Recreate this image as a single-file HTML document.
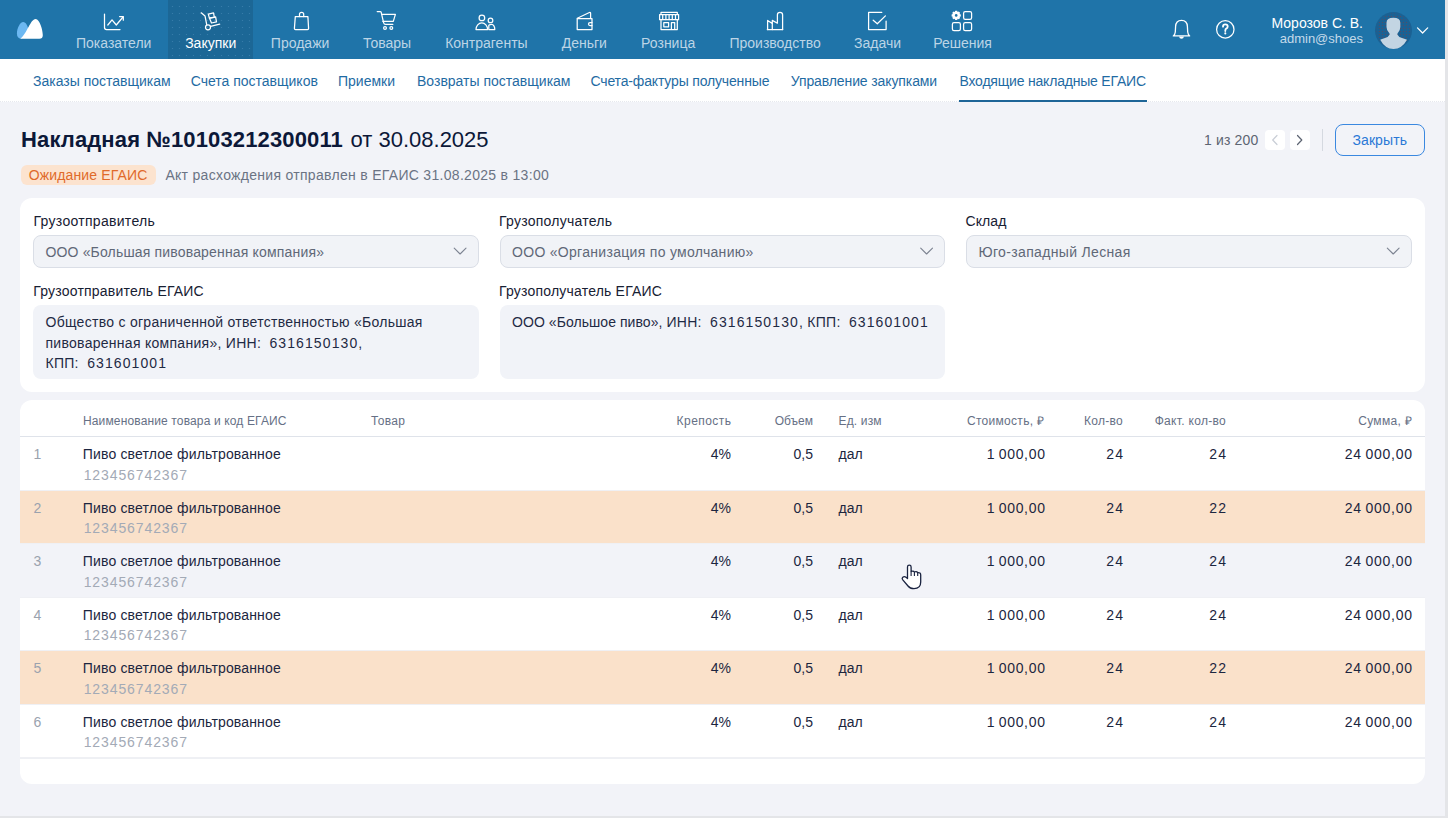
<!DOCTYPE html>
<html><head><meta charset="utf-8">
<style>
*{box-sizing:border-box;margin:0;padding:0}
html,body{width:1448px;height:818px;overflow:hidden}
body{position:relative;background:#f2f3f8;font-family:"Liberation Sans",sans-serif;color:#1c2640}
.a{position:absolute;white-space:nowrap}
#nav{position:absolute;left:0;top:0;width:1445px;height:59px;background:#1f74a9}
#active{position:absolute;left:168px;top:0;width:85px;height:59px;background:#1c6796}
.nl{position:absolute;top:35px;width:140px;text-align:center;font-size:14px;line-height:16px;color:#bcd5e6}
.nl.on{color:#fff}
#sub{position:absolute;left:0;top:59px;width:1445px;height:42.5px;background:#fff;border-bottom:1px dotted #e6e8ee}
.sl{position:absolute;top:73px;font-size:14px;line-height:16px;color:#1f6ba3}
#rstrip{position:absolute;left:1445px;top:0;width:3px;height:818px;background:#e4e5e8}
#bstrip{position:absolute;left:0;top:816px;width:1448px;height:2px;background:#e4e5e8}
.card{position:absolute;background:#fff;border-radius:12px}
.lbl{position:absolute;font-size:14px;line-height:16px;color:#172033}
.fld{position:absolute;height:33px;background:#f1f3f7;border:1px solid #dadee6;border-radius:8px}
.ft{position:absolute;font-size:14px;line-height:16px;color:#606877;letter-spacing:0.17px}
.box{position:absolute;background:#f1f3f8;border-radius:8px}
.bt{position:absolute;font-size:14px;line-height:20.7px;color:#1f2a44;letter-spacing:0.28px}
.th{position:absolute;top:413px;font-size:12px;line-height:16px;color:#667085;letter-spacing:0.3px}
.row{position:absolute;left:20px;width:1404.5px;border-bottom:1px solid #eff0f4}
.td{position:absolute;font-size:14px;line-height:16px;color:#1c2640}
.r{text-align:right}
.num{letter-spacing:1.1px}
</style></head><body>
<div id="nav">
  <div id="active"><svg width="85" height="59" style="position:absolute;left:0;top:0"><defs><pattern id="adots" x="1" y="3" width="7" height="7" patternUnits="userSpaceOnUse"><circle cx="3.5" cy="3.5" r="0.6" fill="rgba(140,195,235,0.28)"/></pattern></defs><rect width="85" height="59" fill="url(#adots)"/></svg></div>
  <svg class="a" style="left:0;top:0" width="1445" height="59" viewBox="0 0 1445 59">
    <!-- logo -->
    <path d="M23.4 21.9 C19.8 21.9 16.9 28.5 16.9 33.3 C16.9 37 18.5 38.7 20.8 38.7 C23.5 38.7 27 33 28.6 29.6 C27.5 25.5 25.6 21.9 23.4 21.9 Z" fill="#6cb8f2"/>
    <path d="M20.3 38.7 C27 33.5 30.6 18.9 35.5 18.9 C40 18.9 42.8 30.5 42.8 35.2 C42.8 37.6 41.6 38.7 39.4 38.7 Z" fill="#fff"/>
    <g fill="none" stroke="#fff" stroke-width="1.25" stroke-linecap="round" stroke-linejoin="round">
      <!-- chart -->
      <path d="M104.5 14 V27.5 Q104.5 29.6 106.6 29.6 H120"/>
      <path d="M107.8 25 L112 19.8 L116.3 25 L123 17"/>
      <path d="M119.6 16.6 H123.3 V20.2"/>
      <!-- trolley -->
      <path d="M201.2 12.8 L205 15.9 L206.7 24.6"/>
      <circle cx="208" cy="27.3" r="2.5"/>
      <path d="M210.6 26.4 L219.7 24.1"/>
      <path d="M208.3 14.1 L213.5 12.8 L214.4 17.4 L209.4 18.1 Z"/>
      <path d="M209.4 18.1 L215.6 16.8 L216.5 21.9 L211.5 23 Z"/>
      <!-- bag -->
      <path d="M295.3 16.6 H307.9 L308.6 28.5 Q308.6 29.6 307.5 29.6 H295.5 Q294.4 29.6 294.4 28.5 Z"/>
      <path d="M299.5 16.6 V14.3 Q299.5 12.3 301.6 12.3 Q303.7 12.3 303.7 14.3 V16.6"/>
      <!-- cart -->
      <path d="M377.2 11.5 H380.2 Q380.9 11.5 381.2 12.3 L383.6 22.6 Q384 24.4 385.6 24.4 H392.8"/>
      <path d="M381.7 14.4 H395.4 L393.3 21.4 H382.9"/>
      <circle cx="385" cy="28" r="1.4"/>
      <circle cx="391.3" cy="28" r="1.4"/>
      <!-- people -->
      <circle cx="481.9" cy="17.9" r="2.8"/>
      <path d="M476 29.6 A5.8 6.6 0 0 1 487.6 29.6 Z"/>
      <circle cx="490.5" cy="20.4" r="2.3"/>
      <path d="M488.8 29.6 V25.3 Q490 24.4 491.6 24.4 A3.1 5.1 0 0 1 494.8 29.6 Z"/>
      <!-- wallet -->
      <path d="M577.2 18.7 H592 V29.6 H577.2 Z"/>
      <path d="M577.3 18.2 L589.4 12.5 Q590.6 12.1 590.6 13.4 V18.4"/>
      <path d="M592 22.5 H590 A1.5 1.5 0 0 0 590 25.5 H592"/>
      <!-- store -->
      <path d="M661 13.7 V12.4 H677.3 V13.7"/>
      <path d="M659.6 14.6 H678.6 V19.7 H659.6 Z"/>
      <path d="M662.7 14.8 V19.5 M665.9 14.8 V19.5 M669.1 14.8 V19.5 M672.3 14.8 V19.5 M675.5 14.8 V19.5"/>
      <path d="M661 19.8 V29.6 H677.3 V19.8"/>
      <path d="M663.8 22.5 H668.6 V26.8 H663.8 Z"/>
      <path d="M671.4 29.4 V22.5 H674.7 V29.4"/>
      <!-- factory -->
      <path d="M767.3 29.6 H782.7"/>
      <path d="M767.6 29.6 V20.4 L772.3 23.6 V20.4 L777.4 23.2 V14.7 Q777.4 12.3 780 12.3 Q782.6 12.3 782.6 14.7 V29.6"/>
      <path d="M772.3 23.6 V29.6"/>
      <!-- tasks -->
      <path d="M881.8 12.3 H868.6 V29.6 H886.1 V21.2"/>
      <path d="M873.2 20.2 L877.3 23.8 L885.4 15.9"/>
      <!-- solutions -->
      <rect x="963.6" y="11.6" width="8" height="7.8" rx="1.6"/>
      <rect x="952.4" y="22.6" width="8" height="8.1" rx="1.6"/>
      <rect x="963.6" y="22.6" width="8" height="8.1" rx="1.6"/>
      <!-- bell -->
      <path d="M1173.3 35.9 Q1175 34.6 1175.3 32 L1175.6 26.5 Q1175.8 20.3 1181.5 20.3 Q1187.2 20.3 1187.4 26.5 L1187.7 32 Q1188 34.6 1189.7 35.9 Z" stroke-width="1.3"/>
      <!-- help -->
      <circle cx="1225.3" cy="29.4" r="8.7"/>
      <!-- chevron -->
      <path d="M1417.5 27.9 L1422.6 33 L1427.7 27.9" stroke-width="1.25"/>
    </g>
    <path d="M1179 36.4 H1184 Q1183.5 38.7 1181.5 38.7 Q1179.5 38.7 1179 36.4 Z" fill="#fff"/>
    <path d="M1223 26.7 Q1223 24.4 1225.3 24.4 Q1227.7 24.4 1227.7 26.5 Q1227.7 27.9 1226.3 28.6 Q1225.3 29.2 1225.3 30.4 V31" fill="none" stroke="#fff" stroke-width="1.8" stroke-linecap="round"/><circle cx="1225.3" cy="33.4" r="1.05" fill="#fff"/>
    <!-- gear -->
    <g transform="translate(956.2 15.4)" fill="#fff">
      <path d="M-1 -4.6 H1 L1.4 -3.4 L2.6 -3.9 L3.9 -2.6 L3.4 -1.4 L4.6 -1 V1 L3.4 1.4 L3.9 2.6 L2.6 3.9 L1.4 3.4 L1 4.6 H-1 L-1.4 3.4 L-2.6 3.9 L-3.9 2.6 L-3.4 1.4 L-4.6 1 V-1 L-3.4 -1.4 L-3.9 -2.6 L-2.6 -3.9 L-1.4 -3.4 Z"/>
      <circle r="1.3" fill="#1f74a9"/>
    </g>
    <!-- avatar -->
    <defs><pattern id="dots" x="1375" y="12" width="3" height="3" patternUnits="userSpaceOnUse"><circle cx="1.5" cy="1.5" r="0.6" fill="#5b4a5e"/></pattern></defs>
    <circle cx="1393.5" cy="30.5" r="18.5" fill="#1b6193"/>
    <circle cx="1393.5" cy="30.5" r="17" fill="url(#dots)"/>
    <path d="M1386.5 22.8 Q1386.5 17.8 1393.4 17.8 Q1400.3 17.8 1400.3 22.8 V27 Q1400 30.5 1398.5 32 Q1397.3 33.2 1397.3 34.5 Q1398.5 37 1402 38 Q1405.5 39 1407 39.8 Q1402 49 1393.5 49 Q1385 49 1380.2 39.8 Q1381.5 39 1385 38 Q1388.5 37 1389.7 34.5 Q1389.7 33.2 1388.5 32 Q1386.8 30.5 1386.5 27 Z" fill="#c3d5e3"/>
  </svg>
  <div class="nl" style="left:43.7px">Показатели</div>
  <div class="nl on" style="left:140.7px">Закупки</div>
  <div class="nl" style="left:230.1px">Продажи</div>
  <div class="nl" style="left:317.1px">Товары</div>
  <div class="nl" style="left:416.4px">Контрагенты</div>
  <div class="nl" style="left:514.3px">Деньги</div>
  <div class="nl" style="left:598.2px">Розница</div>
  <div class="nl" style="left:705.1px">Производство</div>
  <div class="nl" style="left:807.6px">Задачи</div>
  <div class="nl" style="left:892.5px">Решения</div>
  <div class="a" style="left:1263px;top:15px;width:100px;text-align:right;font-size:14px;line-height:16px;color:#fff">Морозов С. В.</div>
  <div class="a" style="left:1263px;top:31px;width:100px;text-align:right;font-size:13px;line-height:16px;color:#c4dae9">admin@shoes</div>
</div>
<div id="sub"></div>
<div class="sl" style="left:33px">Заказы поставщикам</div>
<div class="sl" style="left:190.7px">Счета поставщиков</div>
<div class="sl" style="left:338px">Приемки</div>
<div class="sl" style="left:417px">Возвраты поставщикам</div>
<div class="sl" style="left:590.5px;letter-spacing:-0.16px">Счета-фактуры полученные</div>
<div class="sl" style="left:790.8px;letter-spacing:-0.11px">Управление закупками</div>
<div class="sl" style="left:959.5px;letter-spacing:-0.2px">Входящие накладные ЕГАИС</div>
<div class="a" style="left:959px;top:99.5px;width:188px;height:2px;background:#1e6597"></div>

<!-- title -->
<div class="a" style="left:21px;top:128px;font-size:22px;line-height:24px;color:#0c1838"><b style="letter-spacing:0.13px">Накладная №10103212300011</b> <span style="letter-spacing:0px;margin-left:1.5px">от 30.08.2025</span></div>
<div class="a" style="left:21px;top:165px;width:135px;height:20px;border-radius:6px;background:#fce3cf"></div>
<div class="a" style="left:28.7px;top:167px;font-size:14px;line-height:16px;color:#e06a2a;letter-spacing:0.15px">Ожидание ЕГАИС</div>
<div class="a" style="left:165.4px;top:167px;font-size:14px;line-height:16px;color:#6b7384;letter-spacing:0.3px">Акт расхождения отправлен в ЕГАИС 31.08.2025 в 13:00</div>
<!-- pager -->
<div class="a" style="left:1204px;top:132px;font-size:14px;line-height:16px;color:#5d6472;letter-spacing:0.15px">1 из 200</div>
<div class="a" style="left:1265px;top:130px;width:20px;height:20px;border-radius:4px;background:#fff"></div>
<div class="a" style="left:1289.5px;top:130px;width:20px;height:20px;border-radius:4px;background:#fff"></div>
<svg class="a" style="left:1260px;top:125px" width="60" height="30" viewBox="1260 125 60 30"><g fill="none" stroke-width="1.2" stroke-linecap="round" stroke-linejoin="round"><path d="M1277 135.5 L1272.7 140 L1277 144.5" stroke="#c9ced6"/><path d="M1297.5 135.5 L1301.8 140 L1297.5 144.5" stroke="#5d6472"/></g></svg>
<div class="a" style="left:1322px;top:129px;width:1px;height:22px;background:#d5d9e0"></div>
<div class="a" style="left:1335px;top:123.5px;width:89.5px;height:32px;border:1.5px solid #3a88e0;border-radius:8px"></div>
<div class="a" style="left:1335px;top:132px;width:89.5px;text-align:center;font-size:14px;line-height:16px;color:#2a78d6;letter-spacing:0.1px">Закрыть</div>

<!-- card 1 -->
<div class="card" style="left:20px;top:198px;width:1404.5px;height:193.5px"></div>
<div class="lbl" style="left:33.5px;top:213px;letter-spacing:0.3px">Грузоотправитель</div>
<div class="lbl" style="left:499px;top:213px;letter-spacing:0.25px">Грузополучатель</div>
<div class="lbl" style="left:965.5px;top:213px;letter-spacing:0.1px">Склад</div>
<div class="fld" style="left:33px;top:235px;width:445.5px"></div>
<div class="fld" style="left:499.5px;top:235px;width:445.5px"></div>
<div class="fld" style="left:966.3px;top:235px;width:445.5px"></div>
<div class="ft" style="left:45.4px;top:243.5px">ООО «Большая пивоваренная компания»</div>
<div class="ft" style="left:512px;top:243.5px;letter-spacing:0.3px">ООО «Организация по умолчанию»</div>
<div class="ft" style="left:978.5px;top:243.5px;letter-spacing:0.34px">Юго-западный Лесная</div>
<svg class="a" style="left:0;top:240px" width="1448" height="20" viewBox="0 240 1448 20"><g fill="none" stroke="#7c8391" stroke-width="1.1" stroke-linecap="round" stroke-linejoin="round"><path d="M454.2 248.2 L460.1 254 L466 248.2"/><path d="M920.7 248.2 L926.6 254 L932.5 248.2"/><path d="M1387.3 248.2 L1393.2 254 L1399.1 248.2"/></g></svg>
<div class="lbl" style="left:33.3px;top:283px;letter-spacing:0.2px">Грузоотправитель ЕГАИС</div>
<div class="lbl" style="left:499px;top:283px;letter-spacing:0.2px">Грузополучатель ЕГАИС</div>
<div class="box" style="left:33px;top:305px;width:445.5px;height:74px"></div>
<div class="box" style="left:499.5px;top:305px;width:445.5px;height:74px"></div>
<div class="bt" style="left:45.5px;top:312px">Общество с ограниченной ответственностью «Большая<br>пивоваренная компания», ИНН:&nbsp; <span class="num">6316150130</span>,<br>КПП:&nbsp; <span class="num">631601001</span></div>
<div class="bt" style="left:512px;top:312px"><span style="letter-spacing:0.06px">ООО «Большое пиво», </span>ИНН:&nbsp; <span class="num">6316150130</span>, КПП:&nbsp; <span class="num">631601001</span></div>

<!-- table card -->
<div class="card" style="left:20px;top:400px;width:1404.5px;height:383.5px;overflow:hidden">
</div>
<div class="a" style="left:20px;top:436px;width:1404.5px;height:1px;background:#dfe3ea"></div>
<div class="th" style="left:83px;letter-spacing:0.14px">Наименование товара и код ЕГАИС</div>
<div class="th" style="left:371px">Товар</div>
<div class="th r" style="left:631px;width:100.45px;letter-spacing:0.45px">Крепость</div>
<div class="th r" style="left:713px;width:100px;letter-spacing:0">Объем</div>
<div class="th" style="left:838.5px;letter-spacing:0.15px">Ед. изм</div>
<div class="th r" style="left:944.3px;width:100px">Стоимость, ₽</div>
<div class="th r" style="left:1023px;width:100px">Кол-во</div>
<div class="th r" style="left:1126px;width:100px">Факт. кол-во</div>
<div class="th r" style="left:1312px;width:100px">Сумма, ₽</div>
<div id="rows"></div>
<div class="row" style="top:437.0px;height:53.5px;background:#fff"></div>
<div class="td" style="left:33.5px;top:446.0px;color:#9aa2ae">1</div>
<div class="td" style="left:82.8px;top:446.0px;letter-spacing:0.15px">Пиво светлое фильтрованное</div>
<div class="td" style="left:83.7px;top:466.8px;color:#a3aab6;letter-spacing:0.9px">123456742367</div>
<div class="td r" style="left:631px;width:100px;top:446.0px">4%</div>
<div class="td r" style="left:713px;width:100px;top:446.0px">0,5</div>
<div class="td" style="left:838.5px;top:446.0px">дал</div>
<div class="td r" style="left:945px;width:100px;top:446.0px;letter-spacing:0.7px;width:100.7px">1&#8201;000,00</div>
<div class="td r" style="left:1023px;width:100px;top:446.0px;letter-spacing:1.2px;width:101.2px">24</div>
<div class="td r" style="left:1126px;width:100px;top:446.0px;letter-spacing:1.2px;width:101.2px">24</div>
<div class="td r" style="left:1312px;width:100px;top:446.0px;letter-spacing:0.75px;width:100.75px">24&#8201;000,00</div>
<div class="row" style="top:490.5px;height:53.5px;background:#fae1ca"></div>
<div class="td" style="left:33.5px;top:499.5px;color:#9aa2ae">2</div>
<div class="td" style="left:82.8px;top:499.5px;letter-spacing:0.15px">Пиво светлое фильтрованное</div>
<div class="td" style="left:83.7px;top:520.3px;color:#a3aab6;letter-spacing:0.9px">123456742367</div>
<div class="td r" style="left:631px;width:100px;top:499.5px">4%</div>
<div class="td r" style="left:713px;width:100px;top:499.5px">0,5</div>
<div class="td" style="left:838.5px;top:499.5px">дал</div>
<div class="td r" style="left:945px;width:100px;top:499.5px;letter-spacing:0.7px;width:100.7px">1&#8201;000,00</div>
<div class="td r" style="left:1023px;width:100px;top:499.5px;letter-spacing:1.2px;width:101.2px">24</div>
<div class="td r" style="left:1126px;width:100px;top:499.5px;letter-spacing:1.2px;width:101.2px">22</div>
<div class="td r" style="left:1312px;width:100px;top:499.5px;letter-spacing:0.75px;width:100.75px">24&#8201;000,00</div>
<div class="row" style="top:544.0px;height:53.5px;background:#f2f3f8"></div>
<div class="td" style="left:33.5px;top:553.0px;color:#9aa2ae">3</div>
<div class="td" style="left:82.8px;top:553.0px;letter-spacing:0.15px">Пиво светлое фильтрованное</div>
<div class="td" style="left:83.7px;top:573.8px;color:#a3aab6;letter-spacing:0.9px">123456742367</div>
<div class="td r" style="left:631px;width:100px;top:553.0px">4%</div>
<div class="td r" style="left:713px;width:100px;top:553.0px">0,5</div>
<div class="td" style="left:838.5px;top:553.0px">дал</div>
<div class="td r" style="left:945px;width:100px;top:553.0px;letter-spacing:0.7px;width:100.7px">1&#8201;000,00</div>
<div class="td r" style="left:1023px;width:100px;top:553.0px;letter-spacing:1.2px;width:101.2px">24</div>
<div class="td r" style="left:1126px;width:100px;top:553.0px;letter-spacing:1.2px;width:101.2px">24</div>
<div class="td r" style="left:1312px;width:100px;top:553.0px;letter-spacing:0.75px;width:100.75px">24&#8201;000,00</div>
<div class="row" style="top:597.5px;height:53.5px;background:#fff"></div>
<div class="td" style="left:33.5px;top:606.5px;color:#9aa2ae">4</div>
<div class="td" style="left:82.8px;top:606.5px;letter-spacing:0.15px">Пиво светлое фильтрованное</div>
<div class="td" style="left:83.7px;top:627.3px;color:#a3aab6;letter-spacing:0.9px">123456742367</div>
<div class="td r" style="left:631px;width:100px;top:606.5px">4%</div>
<div class="td r" style="left:713px;width:100px;top:606.5px">0,5</div>
<div class="td" style="left:838.5px;top:606.5px">дал</div>
<div class="td r" style="left:945px;width:100px;top:606.5px;letter-spacing:0.7px;width:100.7px">1&#8201;000,00</div>
<div class="td r" style="left:1023px;width:100px;top:606.5px;letter-spacing:1.2px;width:101.2px">24</div>
<div class="td r" style="left:1126px;width:100px;top:606.5px;letter-spacing:1.2px;width:101.2px">24</div>
<div class="td r" style="left:1312px;width:100px;top:606.5px;letter-spacing:0.75px;width:100.75px">24&#8201;000,00</div>
<div class="row" style="top:651.0px;height:53.5px;background:#fae1ca"></div>
<div class="td" style="left:33.5px;top:660.0px;color:#9aa2ae">5</div>
<div class="td" style="left:82.8px;top:660.0px;letter-spacing:0.15px">Пиво светлое фильтрованное</div>
<div class="td" style="left:83.7px;top:680.8px;color:#a3aab6;letter-spacing:0.9px">123456742367</div>
<div class="td r" style="left:631px;width:100px;top:660.0px">4%</div>
<div class="td r" style="left:713px;width:100px;top:660.0px">0,5</div>
<div class="td" style="left:838.5px;top:660.0px">дал</div>
<div class="td r" style="left:945px;width:100px;top:660.0px;letter-spacing:0.7px;width:100.7px">1&#8201;000,00</div>
<div class="td r" style="left:1023px;width:100px;top:660.0px;letter-spacing:1.2px;width:101.2px">24</div>
<div class="td r" style="left:1126px;width:100px;top:660.0px;letter-spacing:1.2px;width:101.2px">22</div>
<div class="td r" style="left:1312px;width:100px;top:660.0px;letter-spacing:0.75px;width:100.75px">24&#8201;000,00</div>
<div class="row" style="top:704.5px;height:53.5px;background:#fff"></div>
<div class="td" style="left:33.5px;top:713.5px;color:#9aa2ae">6</div>
<div class="td" style="left:82.8px;top:713.5px;letter-spacing:0.15px">Пиво светлое фильтрованное</div>
<div class="td" style="left:83.7px;top:734.3px;color:#a3aab6;letter-spacing:0.9px">123456742367</div>
<div class="td r" style="left:631px;width:100px;top:713.5px">4%</div>
<div class="td r" style="left:713px;width:100px;top:713.5px">0,5</div>
<div class="td" style="left:838.5px;top:713.5px">дал</div>
<div class="td r" style="left:945px;width:100px;top:713.5px;letter-spacing:0.7px;width:100.7px">1&#8201;000,00</div>
<div class="td r" style="left:1023px;width:100px;top:713.5px;letter-spacing:1.2px;width:101.2px">24</div>
<div class="td r" style="left:1126px;width:100px;top:713.5px;letter-spacing:1.2px;width:101.2px">24</div>
<div class="td r" style="left:1312px;width:100px;top:713.5px;letter-spacing:0.75px;width:100.75px">24&#8201;000,00</div>

<div class="a" style="left:20px;top:758px;width:1404.5px;height:1px;background:#eef0f4"></div>
<svg class="a" style="left:895px;top:555px" width="35" height="40" viewBox="895 555 35 40"><path d="M907.5 578.5 V567 Q907.5 565.2 909.3 565.2 Q911.1 565.2 911.1 567 V571.5 Q913.5 570.6 914.4 572.0 Q916.8 571.2 917.7 572.6 Q920.7 572.4 920.7 575 V582 Q920.7 588.6 914 588.6 Q910 588.6 908 586 L902.6 579.6 Q901.6 578.2 902.8 577.2 Q904.3 576 906 577.2 Z" fill="#fff" stroke="#1a2340" stroke-width="1.3" stroke-linejoin="round"/><path d="M911.1 571.5 V576 M914.4 572 V576 M917.7 572.6 V576" stroke="#1a2340" stroke-width="1.1" fill="none"/></svg>
<div id="rstrip"></div>
<div id="bstrip"></div>
</body></html>
